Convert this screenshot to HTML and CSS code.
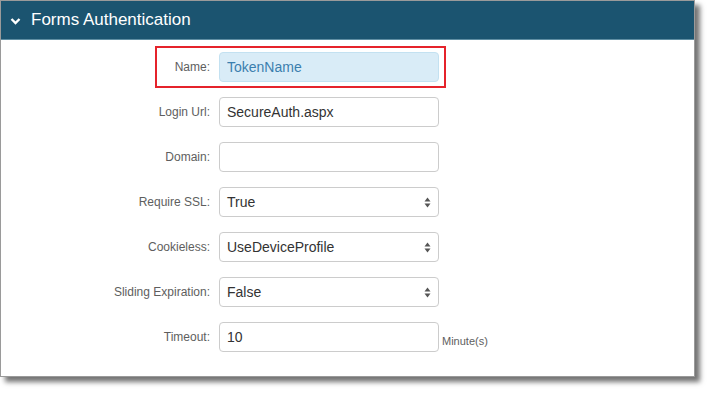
FILE: index.html
```html
<!DOCTYPE html>
<html lang="en">
<head>
    <meta charset="UTF-8">
    <title>Forms Authentication</title>
    <link rel="stylesheet" href="styles.css">
</head>
<body>
    <div class="panel">
        <div class="panel-head">
            <svg class="chevron" width="11" height="8" viewBox="0 0 11 8"><path d="M1.5 2 L5.5 6 L9.5 2" fill="none" stroke="#fff" stroke-width="2.4"/></svg>
            <span>Forms Authentication</span>
        </div>
        <div class="form">
            <div class="row">
                <span class="marker"></span>
                <label>Name:</label>
                <input class="field active" type="text" value="TokenName">
            </div>
            <div class="row">
                <label>Login Url:</label>
                <input class="field" type="text" value="SecureAuth.aspx">
            </div>
            <div class="row">
                <label>Domain:</label>
                <input class="field" type="text" value="">
            </div>
            <div class="row">
                <label>Require SSL:</label>
                <div class="select">
                    <span>True</span>
                    <svg width="7" height="11" viewBox="0 0 7 11"><path d="M3.5 0.5 L6.5 4.5 L0.5 4.5Z M3.5 10.5 L6.5 6.5 L0.5 6.5Z" fill="#555"/></svg>
                </div>
            </div>
            <div class="row">
                <label>Cookieless:</label>
                <div class="select">
                    <span>UseDeviceProfile</span>
                    <svg width="7" height="11" viewBox="0 0 7 11"><path d="M3.5 0.5 L6.5 4.5 L0.5 4.5Z M3.5 10.5 L6.5 6.5 L0.5 6.5Z" fill="#555"/></svg>
                </div>
            </div>
            <div class="row">
                <label>Sliding Expiration:</label>
                <div class="select">
                    <span>False</span>
                    <svg width="7" height="11" viewBox="0 0 7 11"><path d="M3.5 0.5 L6.5 4.5 L0.5 4.5Z M3.5 10.5 L6.5 6.5 L0.5 6.5Z" fill="#555"/></svg>
                </div>
            </div>
            <div class="row">
                <label>Timeout:</label>
                <input class="field" type="text" value="10">
                <span class="unit">Minute(s)</span>
            </div>
        </div>
    </div>
</body>
</html>
```

FILE: styles.css
```css
* {
    margin: 0;
    padding: 0;
    box-sizing: border-box;
    font-family: "Liberation Sans", Arial, sans-serif;
}
body {
    background: #fff;
    width: 710px;
    height: 393px;
}
.panel {
    width: 695px;
    height: 377px;
    border: 1px solid #9a9a9a;
    background: #fff;
    box-shadow: 5px 5px 5px rgba(0, 0, 0, 0.55);
}
.panel-head {
    height: 39px;
    background: #1b5470;
    border-bottom: 1px solid #5f8ea3;
    color: #fff;
    font-size: 17px;
    display: flex;
    align-items: center;
    padding-left: 9px;
    gap: 10px;
}
.chevron {
    margin-top: 1px;
}
.form {
    padding-top: 12px;
    display: flex;
    flex-direction: column;
    gap: 15px;
}
.row {
    position: relative;
    display: flex;
    align-items: center;
    height: 30px;
}
.row label {
    width: 210px;
    text-align: right;
    font-size: 12px;
    color: #5e5e5e;
    padding-right: 1px;
}
.field, .select {
    margin-left: 8px;
    width: 220px;
    height: 30px;
    border: 1px solid #ccc;
    border-radius: 4px;
    padding: 0 7px;
    font-size: 14px;
    color: #333;
    background: #fff;
    outline: none;
}
.field.active {
    background: #d9ecf7;
    border-color: #c3e1f1;
    color: #3b7fae;
}
.select {
    display: flex;
    align-items: center;
    justify-content: space-between;
    padding-right: 7px;
}
.marker {
    position: absolute;
    left: 154px;
    top: -6px;
    width: 291px;
    height: 42px;
    border: 2px solid #e5232b;
}
.unit {
    margin-left: 3px;
    margin-top: 7px;
    font-size: 11px;
    color: #5e5e5e;
}
```
